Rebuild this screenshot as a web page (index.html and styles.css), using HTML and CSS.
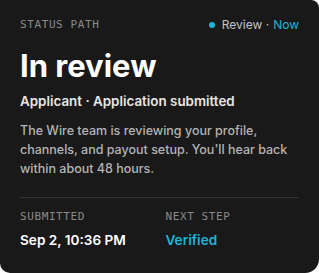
FILE: index.html
```html
<!DOCTYPE html>
<html lang="en">
<head>
    <meta charset="UTF-8">
    <meta name="viewport" content="width=device-width, initial-scale=1.0">
    <title>Status Path</title>
    <link rel="stylesheet" href="styles.css">
</head>
<body>
    <div class="status-card">
        <div class="card-header">
            <span class="label">Status path</span>
            <span class="status-pill">
                <span class="dot"></span>
                <span class="stage">Review ·</span>
                <span class="when">Now</span>
            </span>
        </div>

        <h1 class="title">In review</h1>
        <div class="subtitle">Applicant · Application submitted</div>
        <p class="description">The Wire team is reviewing your profile, channels, and payout setup. You'll hear back within about 48 hours.</p>

        <div class="card-footer">
            <div class="meta">
                <span class="label">Submitted</span>
                <span class="value">Sep 2, 10:36 PM</span>
            </div>
            <div class="meta">
                <span class="label">Next step</span>
                <span class="value accent">Verified</span>
            </div>
        </div>
    </div>
</body>
</html>
```

FILE: styles.css
```css
:root {
    --accent-color: #1ab4d7;
    --bg-card: #191919;
    --muted: #8a8a8a;
}

* {
    margin: 0;
    padding: 0;
    box-sizing: border-box;
    font-family: 'Inter', sans-serif;
}

body {
    width: 319px;
    height: 273px;
    overflow: hidden;
    background: #ffffff;
}

.status-card {
    width: 319px;
    height: 273px;
    background: var(--bg-card);
    border-radius: 0 8px 14px 10px;
    padding: 17px 20px 0 20px;
    display: flex;
    flex-direction: column;
}

.card-header {
    display: flex;
    justify-content: space-between;
    align-items: center;
    height: 16px;
}

.label {
    font-family: 'DejaVu Sans Mono', monospace;
    font-size: 11px;
    line-height: 16px;
    letter-spacing: 0.6px;
    text-transform: uppercase;
    color: var(--muted);
}

.status-pill {
    display: flex;
    align-items: center;
    gap: 4px;
    font-size: 12px;
    line-height: 16px;
}

.dot {
    width: 6px;
    height: 6px;
    border-radius: 50%;
    background: var(--accent-color);
    margin-right: 3px;
}

.stage {
    color: #c4c4c4;
}

.when {
    color: var(--accent-color);
}

.title {
    margin-top: 15px;
    font-size: 31px;
    line-height: 36px;
    font-weight: 700;
    color: #ffffff;
}

.subtitle {
    margin-top: 8px;
    font-size: 13.4px;
    line-height: 18px;
    font-weight: 600;
    color: #e6e6e6;
}

.description {
    margin-top: 11px;
    font-size: 12.5px;
    line-height: 19px;
    font-weight: 500;
    color: #b4b4b4;
}

.card-footer {
    margin-top: 19px;
    border-top: 1px solid #333333;
    padding-top: 11px;
    display: grid;
    grid-template-columns: 1fr 1fr;
    gap: 12px;
}

.meta {
    display: flex;
    flex-direction: column;
    gap: 5px;
}

.value {
    font-size: 13.6px;
    line-height: 20px;
    font-weight: 600;
    color: #ffffff;
}

.value.accent {
    color: var(--accent-color);
}
```
